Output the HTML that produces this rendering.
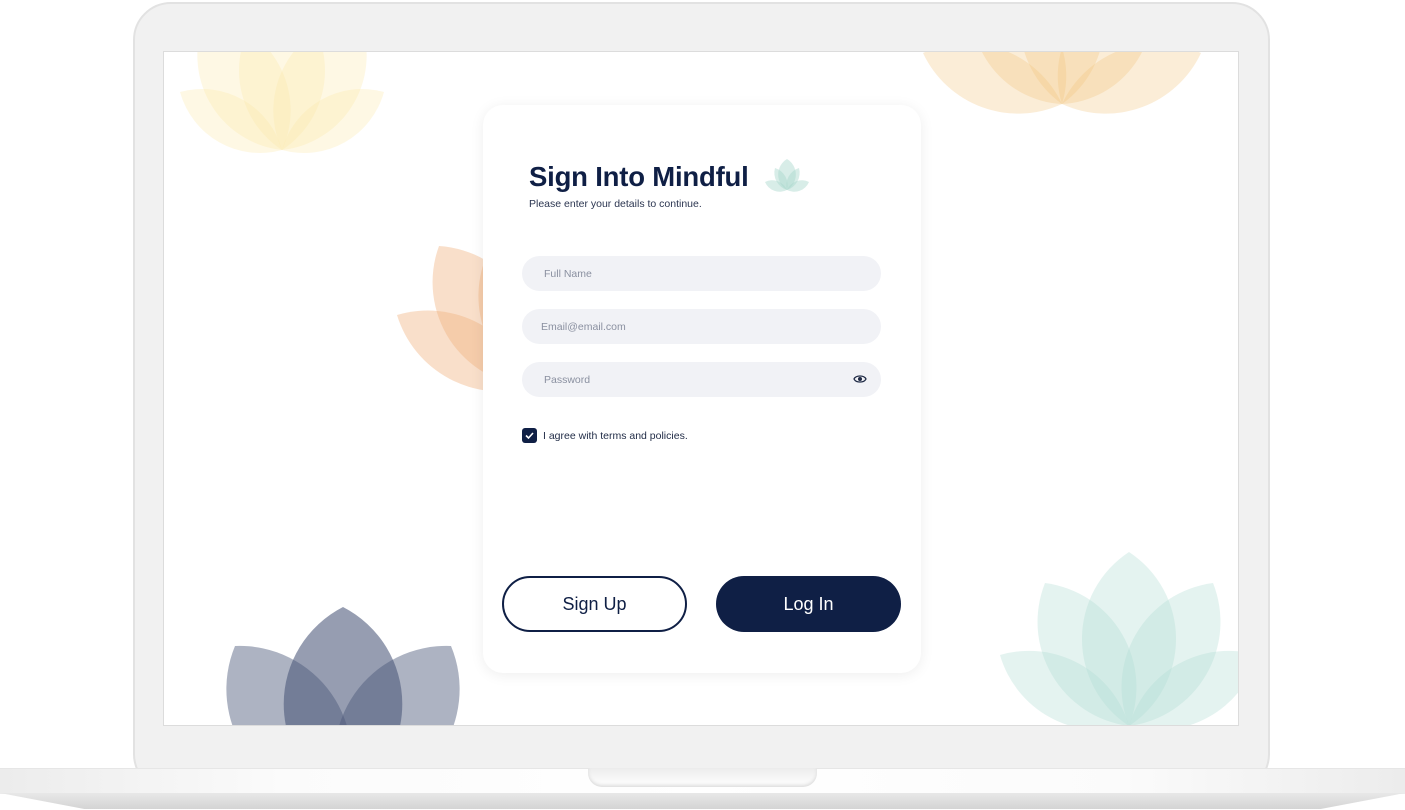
<!DOCTYPE html>
<html><head><meta charset="utf-8"><style>
*{margin:0;padding:0;box-sizing:border-box}
body{width:1405px;height:810px;background:#fff;position:relative;overflow:hidden;font-family:"Liberation Sans",sans-serif}
.frame{position:absolute;left:133px;top:2px;width:1137px;height:790px;border-radius:38px;background:#f1f1f1;border:2px solid #e2e2e2}
.screen{position:absolute;left:163px;top:51px;width:1076px;height:675px;background:#fff;border:1px solid #dcdcdc;overflow:hidden}
.base{position:absolute;left:0;top:768px;width:1405px;height:26px;background:linear-gradient(90deg,#ececec,#fbfbfb 20%,#fff 50%,#fbfbfb 80%,#ececec);border-top:1px solid #e6e6e6}
.base2{position:absolute;left:0;top:793px;width:1405px;height:16px;background:linear-gradient(#e8e8e8,#d4d4d4);clip-path:polygon(0 0,100% 0,94% 100%,6% 100%)}
.notch{position:absolute;left:588px;top:768px;width:229px;height:19px;background:linear-gradient(#ececec,#fff);border-radius:0 0 14px 14px;box-shadow:inset 0 -2px 3px #ddd}
.card{position:absolute;left:319px;top:53px;width:438px;height:568px;background:#fff;border-radius:20px;box-shadow:0 2px 14px rgba(0,0,0,.07)}
h1{position:absolute;left:46px;top:56px;font-size:27.5px;font-weight:bold;color:#0f1f45;letter-spacing:-.2px}
.sub{position:absolute;left:46px;top:93px;font-size:10.5px;color:#2b3550}
.in{position:absolute;left:39px;width:359px;height:35px;border-radius:18px;background:#f1f2f6;font-size:10.5px;color:#8a90a0;padding:12px 0 0 22px}
.chk{position:absolute;left:39px;top:323px;width:15px;height:15px;border-radius:3px;background:#0f1f45}
.agree{position:absolute;left:60px;top:325px;font-size:10.5px;color:#1f2a45}
.btn{position:absolute;top:471px;width:185px;height:56px;border-radius:28px;font-size:18px;text-align:center;line-height:52px}
</style></head><body>
<div class="frame"></div>
<div class="base"></div><div class="base2"></div><div class="notch"></div>
<div class="screen">
<svg width="1076" height="675" viewBox="163 51 1076 675" style="position:absolute;left:0;top:0">
<g fill="#fbe9a6" fill-opacity=".3">
<path d="M281,149 A83,83 0 0 1 179,91 A83,83 0 0 1 281,149Z"/>
<path d="M281,149 A83,83 0 0 1 383,91 A83,83 0 0 1 281,149Z"/>
<path d="M281,149 A95,95 0 0 1 205,15 A95,95 0 0 1 281,149Z"/>
<path d="M281,149 A95,95 0 0 1 357,15 A95,95 0 0 1 281,149Z"/>
<path d="M281,149 A95,95 0 0 1 281,-10 A95,95 0 0 1 281,149Z"/>
</g>
<g fill="#f3c27c" fill-opacity=".3">
<path d="M1061,103 A105,105 0 0 1 922,52 A105,105 0 0 1 1061,103Z"/>
<path d="M1061,103 A105,105 0 0 1 1200,52 A105,105 0 0 1 1061,103Z"/>
<path d="M1061,103 A95,95 0 0 1 975,-20 A95,95 0 0 1 1061,103Z"/>
<path d="M1061,103 A95,95 0 0 1 1147,-20 A95,95 0 0 1 1061,103Z"/>
<path d="M1061,103 A100,100 0 0 1 1061,-60 A100,100 0 0 1 1061,103Z"/>
</g>
<g fill="#f1b07a" fill-opacity=".4">
<path d="M530,386 A108,108 0 0 1 396,314 A108,108 0 0 1 530,386Z"/>
<path d="M530,386 A105,105 0 0 1 438,245 A105,105 0 0 1 530,386Z"/>
<path d="M530,386 A105,105 0 0 1 500,230 A105,105 0 0 1 530,386Z"/>
</g>
<g fill="#4a5678">
<path fill-opacity=".45" d="M342,800 A112,112 0 0 1 234,645 A112,112 0 0 1 342,800Z"/>
<path fill-opacity=".45" d="M342,800 A112,112 0 0 1 450,645 A112,112 0 0 1 342,800Z"/>
<path fill-opacity=".58" d="M342,800 A109,109 0 0 1 342,606 A109,109 0 0 1 342,800Z"/>
</g>
<g fill="#b3dcd3" fill-opacity=".35">
<path d="M1128,725 A104,104 0 0 1 999,654 A104,104 0 0 1 1128,725Z"/>
<path d="M1128,725 A104,104 0 0 1 1257,654 A104,104 0 0 1 1128,725Z"/>
<path d="M1128,725 A105,105 0 0 1 1044,582 A105,105 0 0 1 1128,725Z"/>
<path d="M1128,725 A105,105 0 0 1 1212,582 A105,105 0 0 1 1128,725Z"/>
<path d="M1128,725 A104,104 0 0 1 1128,551 A104,104 0 0 1 1128,725Z"/>
</g>
</svg>
<div class="card">
<h1>Sign Into Mindful</h1>
<svg style="position:absolute;left:280px;top:53px" width="48" height="34" viewBox="0 0 48 34">
<g fill="#a9d7cc" fill-opacity=".45">
<path d="M24,32 A16,16 0 0 1 2,24 A16,16 0 0 1 24,32Z"/>
<path d="M24,32 A16,16 0 0 1 46,24 A16,16 0 0 1 24,32Z"/>
<path d="M24,32 A18,18 0 0 1 12,10 A18,18 0 0 1 24,32Z"/>
<path d="M24,32 A18,18 0 0 1 36,10 A18,18 0 0 1 24,32Z"/>
<path d="M24,32 A18,18 0 0 1 24,1 A18,18 0 0 1 24,32Z"/>
</g></svg>
<div class="sub">Please enter your details to continue.</div>
<div class="in" style="top:151px">Full Name</div>
<div class="in" style="top:204px;padding-left:19px">Email@email.com</div>
<div class="in" style="top:257px">Password
<svg style="position:absolute;right:14px;top:12px" width="14" height="10" viewBox="0 0 14 10"><path d="M1,5 C3,1 11,1 13,5 C11,9 3,9 1,5Z" fill="none" stroke="#1f2a45" stroke-width="1.3"/><circle cx="7" cy="5" r="2" fill="#1f2a45"/></svg></div>
<div class="chk"><svg width="15" height="15" viewBox="0 0 15 15"><path d="M4,7.5 L6.5,10 L11,5" fill="none" stroke="#fff" stroke-width="1.6"/></svg></div>
<div class="agree">I agree with terms and policies.</div>
<div class="btn" style="left:19px;border:2px solid #0f1f45;color:#0f1f45">Sign Up</div>
<div class="btn" style="left:233px;background:#0f1f45;color:#fff;line-height:56px">Log In</div>
</div>
</div>
</body></html>
